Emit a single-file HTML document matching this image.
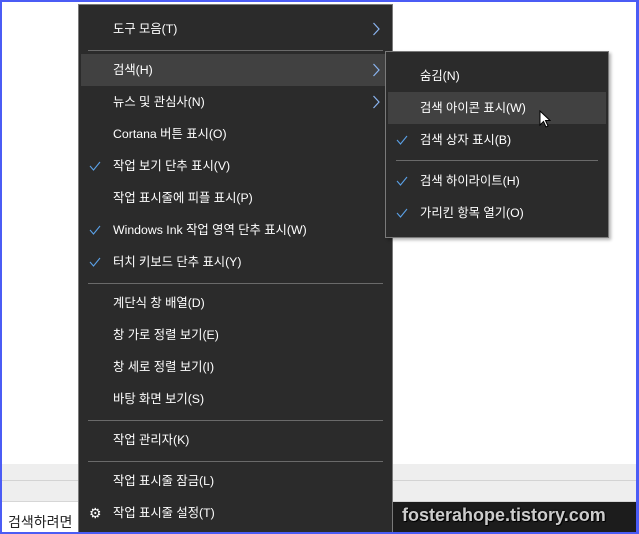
<!DOCTYPE html>
<html><head><meta charset="utf-8"><style>
*{margin:0;padding:0;box-sizing:border-box}
html,body{width:639px;height:534px;overflow:hidden;background:#fff}
#w{position:relative;width:639px;height:534px;overflow:hidden;font-family:"Liberation Sans","Noto Sans CJK KR",sans-serif;font-size:12px}
.frame{position:absolute;left:0;top:0;width:639px;height:534px;border:2px solid #4b5cf5;border-right-width:3px;pointer-events:none;z-index:10}
.grey{position:absolute;left:0;top:464px;width:639px;height:38px;background:#eeeeee;border-bottom:1px solid #d6d6d6}
.gl{position:absolute;left:0;top:480px;width:639px;height:1px;background:#d3d3d3}
.search{position:absolute;left:0;top:502px;width:100px;height:32px;background:#fff;color:#222;font-size:14px;padding:10px 0 0 8px}
.task{position:absolute;left:393px;top:502px;width:246px;height:32px;background:#1c1c1c}
.wm{position:absolute;left:402px;top:505px;color:#ccc;font-size:18px;font-weight:bold;text-shadow:0 0 2px #000,1px 1px 0 #000}
.menu{position:absolute;background:#2b2b2b;border:1px solid #7a7a7a;color:#fff}
.it{position:absolute;left:0;right:0;height:32px;line-height:32px;padding-left:34px;font-size:12.3px}
.it.hl{background:#414141}
.ck{position:absolute;left:10px;top:11px}
.ar{position:absolute;right:12px;top:9px}
.sep{position:absolute;height:1px;background:#6a6a6a}
</style></head><body><div id="w">
<div class="grey"></div><div class="gl"></div>
<div class="search">검색하려면</div>
<div class="task"></div>
<div class="wm">fosterahope.tistory.com</div>

<div class="menu" style="left:78px;top:4px;width:315px;height:540px">
 <div class="it" style="top:8px">도구 모음(T)<svg class="ar" width="8" height="14"><path d="M1.5 1 L7 7 L1.5 13" fill="none" stroke="#8ab4f0" stroke-width="1.2"/></svg></div>
 <div class="sep" style="left:9px;right:9px;top:45px"></div>
 <div class="it hl" style="top:49px;left:2px;right:2px;padding-left:32px">검색(H)<svg class="ar" style="right:10px" width="8" height="14"><path d="M1.5 1 L7 7 L1.5 13" fill="none" stroke="#8ab4f0" stroke-width="1.2"/></svg></div>
 <div class="it" style="top:81px">뉴스 및 관심사(N)<svg class="ar" width="8" height="14"><path d="M1.5 1 L7 7 L1.5 13" fill="none" stroke="#8ab4f0" stroke-width="1.2"/></svg></div>
 <div class="it" style="top:113px">Cortana 버튼 표시(O)</div>
 <div class="it" style="top:145px"><svg class="ck" width="12" height="10"><path d="M1 5 L4.5 9 L11 1" fill="none" stroke="#5aa0e6" stroke-width="1.1"/></svg>작업 보기 단추 표시(V)</div>
 <div class="it" style="top:177px">작업 표시줄에 피플 표시(P)</div>
 <div class="it" style="top:209px"><svg class="ck" width="12" height="10"><path d="M1 5 L4.5 9 L11 1" fill="none" stroke="#5aa0e6" stroke-width="1.1"/></svg>Windows Ink 작업 영역 단추 표시(W)</div>
 <div class="it" style="top:241px"><svg class="ck" width="12" height="10"><path d="M1 5 L4.5 9 L11 1" fill="none" stroke="#5aa0e6" stroke-width="1.1"/></svg>터치 키보드 단추 표시(Y)</div>
 <div class="sep" style="left:9px;right:9px;top:278px"></div>
 <div class="it" style="top:282px">계단식 창 배열(D)</div>
 <div class="it" style="top:314px">창 가로 정렬 보기(E)</div>
 <div class="it" style="top:346px">창 세로 정렬 보기(I)</div>
 <div class="it" style="top:378px">바탕 화면 보기(S)</div>
 <div class="sep" style="left:9px;right:9px;top:415px"></div>
 <div class="it" style="top:419px">작업 관리자(K)</div>
 <div class="sep" style="left:9px;right:9px;top:456px"></div>
 <div class="it" style="top:460px">작업 표시줄 잠금(L)</div>
 <div class="it" style="top:492px"><span style="position:absolute;left:10px;top:0;font-size:14px">⚙</span>작업 표시줄 설정(T)</div>
</div>

<div class="menu" style="left:385px;top:51px;width:224px;height:187px;box-shadow:2px 2px 3px rgba(0,0,0,.3)">
 <div class="it" style="top:8px">숨김(N)</div>
 <div class="it hl" style="top:40px;left:2px;right:2px;padding-left:32px">검색 아이콘 표시(W)</div>
 <div class="it" style="top:72px"><svg class="ck" width="12" height="10"><path d="M1 5 L4.5 9 L11 1" fill="none" stroke="#5aa0e6" stroke-width="1.1"/></svg>검색 상자 표시(B)</div>
 <div class="sep" style="left:10px;right:10px;top:108px"></div>
 <div class="it" style="top:113px"><svg class="ck" width="12" height="10"><path d="M1 5 L4.5 9 L11 1" fill="none" stroke="#5aa0e6" stroke-width="1.1"/></svg>검색 하이라이트(H)</div>
 <div class="it" style="top:145px"><svg class="ck" width="12" height="10"><path d="M1 5 L4.5 9 L11 1" fill="none" stroke="#5aa0e6" stroke-width="1.1"/></svg>가리킨 항목 열기(O)</div>
</div>
<svg style="position:absolute;left:539px;top:110px" width="12" height="20" viewBox="0 0 12 20"><path d="M1 1 L1 15 L4.5 11.5 L7 17 L9 16 L6.5 10.5 L11 10.5 Z" fill="#fff" stroke="#000" stroke-width="1"/></svg>
<div class="frame"></div>
</div></body></html>
